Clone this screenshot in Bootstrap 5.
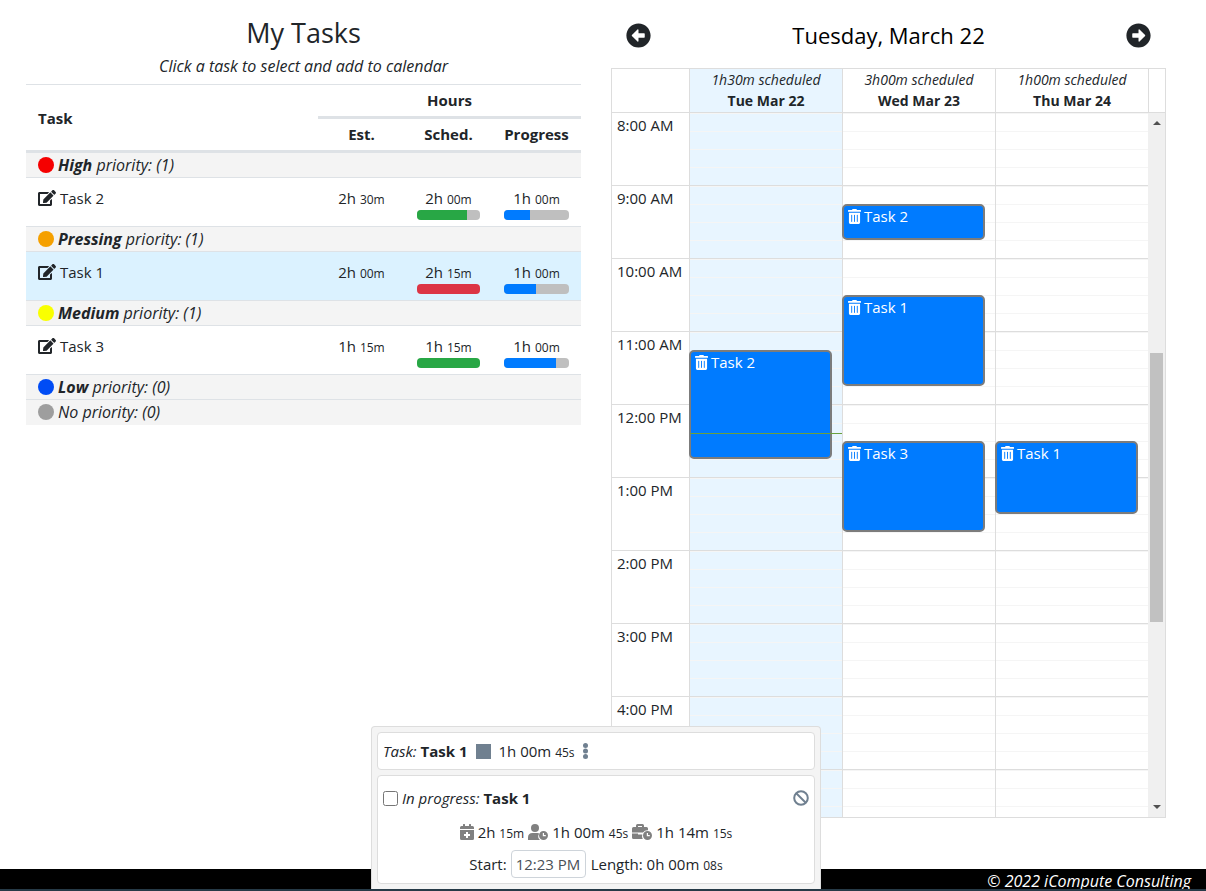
<!DOCTYPE html>
<html lang="en">
<head>
<meta charset="utf-8">
<meta name="viewport" content="width=device-width, initial-scale=1">
<title>My Tasks</title>
<link href="https://cdn.jsdelivr.net/npm/bootstrap@5.3.0/dist/css/bootstrap.min.css" rel="stylesheet">
<style>
  body { font-family: "Open Sans", "Noto Sans", sans-serif; font-size: 15px; line-height: 24px; color: #212529; overflow: hidden; }
  svg { display: block; fill: currentColor; }
  h1 { font-size: 27px; line-height: 34px; }
  h2 { font-size: 22px; line-height: 34px; color: #000; }
  small { font-size: 12px; line-height: 1; }
  .bare { border: 0; background: none; padding: 0; color: inherit; }
  .page { padding: 16px 25px 0 11px; }
  .page > .row { --bs-gutter-x: 30px; margin: 0; }
  .task-hint { font-size: 16px; padding: 4px 0 6px; }

  .task-table { table-layout: fixed; width: 100%; border-top: 1px solid #dee2e6; }
  .task-table th, .task-table td { padding: 0 12px; }
  .task-table thead th { height: 33px; font-weight: 700; }
  .task-table thead tr + tr th { height: 34px; }
  .task-table thead th.text-center { padding: 0 0 2px; }
  .task-table thead .hours-head { border-bottom: 3px solid #dee2e6; }
  .task-table thead { border-bottom: 3px solid #dee2e6; }
  .task-table tbody tr { border-bottom: 1px solid #dee2e6; }
  .task-table tbody tr:last-child { border-bottom: 0; }
  .group-row th { height: 25px; background: #f4f4f4; font-size: 16px; font-style: italic; font-weight: 400; }
  .task-row td { height: 49px; vertical-align: top; padding-top: 8px; }
  .dot { width: 16px; height: 16px; border-radius: 50%; margin-right: 4px; }
  .task-row.selected td { background: #dbf2ff; }
  .meter { height: 10px; border-radius: 4px; background: #bfbfbf; }
  .c-est { width: 87px; } .c-prog { width: 89px; }
  .dot-high { background: #f50000; } .dot-pressing { background: #f5a000; }
  .dot-medium { background: #f9ff00; } .dot-low { background: #004cf5; } .dot-none { background: #9e9e9e; }
  .fill-ok { background: #28a745; } .fill-over { background: #dc3545; } .fill-prog { background: #007bff; }

  .day-nav { padding: 2px 15px 0; }
  .calendar { border: 1px solid #ddd; margin-top: 16px; }
  .cal-grid { display: grid; grid-template-columns: 77px repeat(3, 1fr) 17px; }
  .cal-head { border-bottom: 1px solid #ddd; font-size: 14px; line-height: 21px; height: 44px; }
  .cal-head > * + * { border-left: 1px solid #ddd; }
  .cal-head em, .cal-head b { display: block; }
  .today { background: #e8f5ff; }
  .cal-body { height: calc(100vh - 187px); overflow: hidden; }
  .hour { height: 73px; border-bottom: 1px solid #ddd; }
  .axis .hour { padding-left: 5px; }
  .day { position: relative; border-left: 1px solid #ddd; }
  .day .hour { background: repeating-linear-gradient(#f5f5f5 0 1px, transparent 1px 18px); }
  .slot-event { position: absolute; left: -1px; right: 10px; background: #007bff; border: 2px solid #7c7c7c; border-radius: 5px; color: #fff; padding: 0 4px; line-height: 20px; }
  .event-name { margin-left: 3px; }
  .now-line { position: absolute; left: 0; right: 0; border-top: 1px solid #6b9f3c; z-index: 2; }
  .scrollbar-track { background: #f0f0f0; height: calc(100vh - 187px); padding: 7px 2px; color: #505050; }
  .scroll-thumb { flex: 0 0 269px; background: #c1c1c1; width: 13px; }
  .spacer-top { flex-grow: 5; } .spacer-bottom { flex-grow: 4; }

  .timer { position: fixed; bottom: 2px; left: 371px; width: 450px; background: #f4f4f4; border: 1px solid #ddd; border-bottom: 0; border-radius: 4px 4px 0 0; padding: 5px; z-index: 1040; }
  .panel { background: #fff; border: 1px solid #ddd; border-radius: 4px; padding: 6px 5px; }
  .panel + .panel { margin-top: 5px; padding-top: 10px; padding-bottom: 3px; }
  .progress-line { margin-bottom: 6px; }
  .stat-line { height: 32px; }
  .steel { color: #708090; } .ash { color: #808080; }
  .timer input[type=checkbox] { width: 15px; height: 15px; margin: 0 4px 0 0; }
  .timer input[type=text] { width: 75px; height: 28px; padding: 0 4px; border: 1px solid #ced4da; border-radius: 4px; color: #495057; margin: 0 5px 0 4px; }
  .stop-square { width: 15px; height: 15px; background: #708090; }
  .site-footer { height: 22px; background: #000; color: #fff; font-size: 16px; padding-right: 15px; overflow: hidden; border-bottom: 2px solid #263a47; }
</style>
</head>
<body>
<svg class="d-none" aria-hidden="true">
  <symbol id="edit" viewBox="0 0 576 512"><path d="M402.600 83.200l90.200 90.200c3.800 3.800 3.800 10 0 13.800L274.400 405.600l-92.800 10.300c-12.400 1.400-22.900-9.100-21.500-21.500l10.300-92.800L388.800 83.200c3.800-3.800 10-3.800 13.800 0zm162-22.900l-48.800-48.800c-15.200-15.200-39.900-15.200-55.200 0l-35.400 35.400c-3.800 3.800-3.800 10 0 13.800l90.200 90.200c3.800 3.800 10 3.800 13.800 0l35.400-35.400c15.200-15.300 15.200-40 0-55.200zM384 346.200V448H64V128h229.800c3.200 0 6.200-1.300 8.500-3.500l40-40c7.600-7.600 2.200-20.500-8.500-20.500H48C21.500 64 0 85.500 0 112v352c0 26.500 21.500 48 48 48h352c26.500 0 48-21.500 48-48V306.200c0-10.700-12.900-16-20.500-8.500l-40 40c-2.200 2.300-3.500 5.300-3.500 8.500z"/></symbol>
  <symbol id="arrow" viewBox="0 0 512 512"><path d="M256 504C119 504 8 393 8 256S119 8 256 8s248 111 248 248-111 248-248 248zm116-292H256v-70.900c0-10.700-13-16.100-20.500-8.500L121.200 247.500c-4.700 4.700-4.700 12.200 0 16.900l114.300 114.900c7.600 7.600 20.500 2.200 20.500-8.500V300h116c6.600 0 12-5.400 12-12v-64c0-6.600-5.400-12-12-12z"/></symbol>
  <symbol id="trash" viewBox="0 0 448 512"><path d="M32 464a48 48 0 0 0 48 48h288a48 48 0 0 0 48-48V128H32zm272-256a16 16 0 0 1 32 0v224a16 16 0 0 1-32 0zm-96 0a16 16 0 0 1 32 0v224a16 16 0 0 1-32 0zm-96 0a16 16 0 0 1 32 0v224a16 16 0 0 1-32 0zM432 32H312l-9.400-18.700A24 24 0 0 0 281.100 0H166.800a23.700 23.700 0 0 0-21.400 13.300L136 32H16A16 16 0 0 0 0 48v32a16 16 0 0 0 16 16h416a16 16 0 0 0 16-16V48a16 16 0 0 0-16-16z"/></symbol>
</svg>

<main class="container-fluid page">
  <div class="row">
    <section class="col-6">
      <h1 class="text-center mb-0">My Tasks</h1>
      <p class="text-center fst-italic mb-0 task-hint">Click a task to select and add to calendar</p>
      <table class="task-table">
        <colgroup><col><col class="c-est"><col class="c-est"><col class="c-prog"></colgroup>
        <thead>
          <tr><th rowspan="2" scope="col">Task</th><th colspan="3" class="text-center hours-head" scope="colgroup">Hours</th></tr>
          <tr><th class="text-center" scope="col">Est.</th><th class="text-center" scope="col">Sched.</th><th class="text-center" scope="col">Progress</th></tr>
        </thead>
        <tbody>
          <tr class="group-row"><th colspan="4"><div class="d-flex align-items-center"><span class="dot dot-high"></span><span><b>High</b> priority: (1)</span></div></th></tr>
          <tr class="task-row">
            <td><div class="d-flex align-items-center"><button class="bare me-1" aria-label="Edit Task 2"><svg width="18" height="16"><use href="#edit"/></svg></button>Task 2</div></td>
            <td class="text-center">2h <small>30m</small></td>
            <td class="text-center">2h <small>00m</small><div class="meter overflow-hidden"><div class="h-100 fill-ok" style="width:80%"></div></div></td>
            <td class="text-center">1h <small>00m</small><div class="meter overflow-hidden"><div class="h-100 fill-prog" style="width:40%"></div></div></td>
          </tr>
          <tr class="group-row"><th colspan="4"><div class="d-flex align-items-center"><span class="dot dot-pressing"></span><span><b>Pressing</b> priority: (1)</span></div></th></tr>
          <tr class="task-row selected">
            <td><div class="d-flex align-items-center"><button class="bare me-1" aria-label="Edit Task 1"><svg width="18" height="16"><use href="#edit"/></svg></button>Task 1</div></td>
            <td class="text-center">2h <small>00m</small></td>
            <td class="text-center">2h <small>15m</small><div class="meter overflow-hidden"><div class="h-100 fill-over" style="width:100%"></div></div></td>
            <td class="text-center">1h <small>00m</small><div class="meter overflow-hidden"><div class="h-100 fill-prog" style="width:50%"></div></div></td>
          </tr>
          <tr class="group-row"><th colspan="4"><div class="d-flex align-items-center"><span class="dot dot-medium"></span><span><b>Medium</b> priority: (1)</span></div></th></tr>
          <tr class="task-row">
            <td><div class="d-flex align-items-center"><button class="bare me-1" aria-label="Edit Task 3"><svg width="18" height="16"><use href="#edit"/></svg></button>Task 3</div></td>
            <td class="text-center">1h <small>15m</small></td>
            <td class="text-center">1h <small>15m</small><div class="meter overflow-hidden"><div class="h-100 fill-ok" style="width:100%"></div></div></td>
            <td class="text-center">1h <small>00m</small><div class="meter overflow-hidden"><div class="h-100 fill-prog" style="width:80%"></div></div></td>
          </tr>
          <tr class="group-row"><th colspan="4"><div class="d-flex align-items-center"><span class="dot dot-low"></span><span><b>Low</b> priority: (0)</span></div></th></tr>
          <tr class="group-row"><th colspan="4"><div class="d-flex align-items-center"><span class="dot dot-none"></span><span>No priority: (0)</span></div></th></tr>
        </tbody>
      </table>
    </section>

    <section class="col-6">
      <div class="d-flex align-items-center justify-content-between day-nav">
        <button class="bare" aria-label="Previous day"><svg width="25" height="25"><use href="#arrow"/></svg></button>
        <h2 class="fw-normal mb-0">Tuesday, March 22</h2>
        <button class="bare" aria-label="Next day"><svg width="25" height="25" viewBox="0 0 24 24"><g transform="rotate(180 12 12)"><use href="#arrow" width="24" height="24"/></g></svg></button>
      </div>
      <div class="calendar">
        <div class="cal-grid cal-head text-center">
          <div></div>
          <div class="today"><em>1h30m scheduled</em><b>Tue Mar 22</b></div>
          <div><em>3h00m scheduled</em><b>Wed Mar 23</b></div>
          <div><em>1h00m scheduled</em><b>Thu Mar 24</b></div>
          <div></div>
        </div>
        <div class="cal-grid cal-body">
          <div class="axis">
            <div class="hour">8:00 AM</div><div class="hour">9:00 AM</div><div class="hour">10:00 AM</div><div class="hour">11:00 AM</div><div class="hour">12:00 PM</div><div class="hour">1:00 PM</div><div class="hour">2:00 PM</div><div class="hour">3:00 PM</div><div class="hour">4:00 PM</div><div class="hour"></div>
          </div>
          <div class="day today">
            <div class="hour"></div><div class="hour"></div><div class="hour"></div><div class="hour"></div><div class="hour"></div><div class="hour"></div><div class="hour"></div><div class="hour"></div><div class="hour"></div><div class="hour"></div>
            <div class="slot-event" style="top:237px;height:109px"><div class="d-flex align-items-center"><button class="bare" aria-label="Delete"><svg width="13" height="15"><use href="#trash"/></svg></button><span class="event-name">Task 2</span></div></div>
            <div class="now-line" style="top:320px"></div>
          </div>
          <div class="day">
            <div class="hour"></div><div class="hour"></div><div class="hour"></div><div class="hour"></div><div class="hour"></div><div class="hour"></div><div class="hour"></div><div class="hour"></div><div class="hour"></div><div class="hour"></div>
            <div class="slot-event" style="top:91px;height:36px"><div class="d-flex align-items-center"><button class="bare" aria-label="Delete"><svg width="13" height="15"><use href="#trash"/></svg></button><span class="event-name">Task 2</span></div></div>
            <div class="slot-event" style="top:182px;height:91px"><div class="d-flex align-items-center"><button class="bare" aria-label="Delete"><svg width="13" height="15"><use href="#trash"/></svg></button><span class="event-name">Task 1</span></div></div>
            <div class="slot-event" style="top:328px;height:91px"><div class="d-flex align-items-center"><button class="bare" aria-label="Delete"><svg width="13" height="15"><use href="#trash"/></svg></button><span class="event-name">Task 3</span></div></div>
          </div>
          <div class="day">
            <div class="hour"></div><div class="hour"></div><div class="hour"></div><div class="hour"></div><div class="hour"></div><div class="hour"></div><div class="hour"></div><div class="hour"></div><div class="hour"></div><div class="hour"></div>
            <div class="slot-event" style="top:328px;height:73px"><div class="d-flex align-items-center"><button class="bare" aria-label="Delete"><svg width="13" height="15"><use href="#trash"/></svg></button><span class="event-name">Task 1</span></div></div>
          </div>
          <div class="scrollbar-track d-flex flex-column align-items-center">
            <svg width="8" height="5"><path d="M0 5L4 1L8 5z"/></svg>
            <div class="spacer-top"></div>
            <div class="scroll-thumb"></div>
            <div class="spacer-bottom"></div>
            <svg width="8" height="5"><path d="M0 0L4 4L8 0z"/></svg>
          </div>
        </div>
      </div>
    </section>
  </div>
</main>

<aside class="timer">
  <div class="panel d-flex align-items-center">
    <em>Task:</em><b class="ms-1">Task 1</b>
    <button class="bare stop-square mx-2" aria-label="Stop"></button>
    <span>1h 00m <small>45s</small></span>
    <button class="bare steel ms-2" aria-label="More"><svg width="5" height="16"><circle cx="2.500" cy="2.500" r="2.500"/><circle cx="2.500" cy="8" r="2.500"/><circle cx="2.500" cy="13.500" r="2.500"/></svg></button>
  </div>
  <div class="panel">
    <div class="d-flex align-items-center progress-line">
      <input type="checkbox" id="done"><label for="done"><em>In progress:</em> <b>Task 1</b></label>
      <button class="bare steel ms-auto" aria-label="Cancel"><svg width="16" height="16" viewBox="0 0 16 16"><circle cx="8" cy="8" r="6.800" fill="none" stroke="currentColor" stroke-width="2"/><path d="M3.500 3.500L12.500 12.500" stroke="currentColor" stroke-width="2"/></svg></button>
    </div>
    <div class="stat-line d-flex align-items-center justify-content-center gap-1">
      <svg class="ash" width="14" height="16" viewBox="0 0 14 16"><path fill-rule="evenodd" d="M3 .5q0-.5.500-.5h1q.500 0 .500.500V2h4V.5q0-.5.500-.5h1q.500 0 .500.500V2h1.500Q14 2 14 3.500V5H0V3.500Q0 2 1.500 2H3zM0 6h14v8.500q0 1.500-1.500 1.500h-11Q0 16 0 14.500zM6 8v2H4v2h2v2h2v-2h2v-2H8V8z"/></svg>
      <span>2h <small>15m</small></span>
      <svg class="ash" width="20" height="16" viewBox="0 0 20 16"><circle cx="7" cy="4" r="4"/><path d="M0 16v-2.500Q0 9 4.500 9h5q1 0 1.800.4A5 5 0 0 0 12 16z"/><path fill-rule="evenodd" d="M15.500 7a4.500 4.500 0 1 1 0 9a4.500 4.500 0 0 1 0-9zm-.7 2v3.200h3V11H16V9z"/></svg>
      <span>1h 00m <small>45s</small></span>
      <svg class="ash" width="20" height="16" viewBox="0 0 20 16"><path fill-rule="evenodd" d="M4 3V1.500Q4 0 5.500 0h5Q12 0 12 1.500V3h2.500Q16 3 16 4.500v1.800A5.500 5.500 0 0 0 11 8.500H0v-4Q0 3 1.500 3zM6 2v1h4V2zM0 9.500h6v1h4.300a5.500 5.500 0 0 0 .5 4.500H1.500Q0 15 0 13.500z"/><path fill-rule="evenodd" d="M15.500 7a4.500 4.500 0 1 1 0 9a4.500 4.500 0 0 1 0-9zm-.7 2v3.200h3V11H16V9z"/></svg>
      <span>1h 14m <small>15s</small></span>
    </div>
    <div class="stat-line d-flex align-items-center justify-content-center">
      <label for="start">Start:</label><input type="text" id="start" value="12:23 PM"><span>Length: 0h 00m <small>08s</small></span>
    </div>
  </div>
</aside>
<footer class="site-footer fixed-bottom text-end fst-italic">© 2022 iCompute Consulting</footer>
<script src="https://cdn.jsdelivr.net/npm/bootstrap@5.3.0/dist/js/bootstrap.bundle.min.js"></script>
</body>
</html>
